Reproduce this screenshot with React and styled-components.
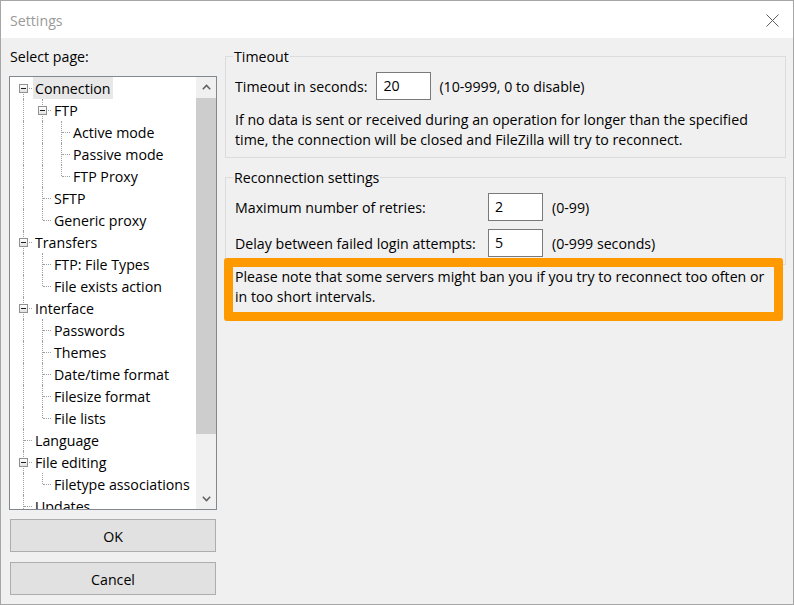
import React from "react";
import styled, { createGlobalStyle } from "styled-components";

const GlobalStyle = createGlobalStyle`
  html, body {
    margin: 0;
    padding: 0;
    background: #fff;
  }
  body {
    font-family: "Open Sans", "Noto Sans", sans-serif;
    font-size: 14.2px;
    color: #000;
  }
`;

const Window = styled.div`
  width: 794px;
  height: 605px;
  box-sizing: border-box;
  border: 1px solid #a6a6a6;
  display: flex;
  flex-direction: column;
  background: #f0f0f0;
`;

const TitleBar = styled.div`
  height: 37px;
  flex: none;
  background: #fff;
  display: flex;
  align-items: center;
  justify-content: space-between;
  padding: 1px 14px 0 9px;
  box-sizing: border-box;
  color: #9a9a9a;
`;

const CloseIcon = styled.svg`
  width: 13px;
  height: 13px;
  display: block;
`;

const Body = styled.div`
  flex: 1;
  display: flex;
  gap: 8px;
  padding: 8px 7px 0 8px;
`;

const LeftColumn = styled.div`
  width: 208px;
  flex: none;
  display: flex;
  flex-direction: column;
`;

const Caption = styled.div`
  line-height: 20px;
  padding-top: 1px;
  margin: 0 0 9px 1px;
`;

const TreeBox = styled.div`
  height: 434px;
  box-sizing: border-box;
  border: 1px solid #828790;
  background: #fff;
  display: flex;
  overflow: hidden;
`;

const TreeList = styled.div`
  flex: 1;
  min-width: 0;
  overflow: hidden;
  padding-left: 4px;
`;

const Row = styled.div`
  display: flex;
  align-items: center;
  height: 22px;
  white-space: nowrap;
`;

const Guide = styled.span`
  position: relative;
  flex: none;
  width: 19px;
  height: 22px;
  &::before {
    content: "";
    position: absolute;
    left: 9px;
    top: ${(p) => (p.$kind === "first" ? "11px" : "0")};
    bottom: ${(p) => (p.$kind === "elbow" ? "11px" : "0")};
    border-left: 1px dotted #a0a0a0;
    display: ${(p) => (p.$kind === "none" ? "none" : "block")};
  }
  &::after {
    content: "";
    position: absolute;
    left: 10px;
    right: 1px;
    top: 11px;
    border-top: 1px dotted #a0a0a0;
    display: ${(p) => (p.$kind === "pipe" || p.$kind === "none" ? "none" : "block")};
  }
`;

const Expander = styled.span`
  position: absolute;
  z-index: 1;
  left: 5px;
  top: 7px;
  width: 9px;
  height: 9px;
  box-sizing: border-box;
  border: 1px solid #919191;
  background: linear-gradient(#ffffff, #e2e2e2);
  &::after {
    content: "";
    position: absolute;
    left: 1px;
    right: 1px;
    top: 3px;
    height: 1px;
    background: #1e1e1e;
  }
`;

const Label = styled.span`
  padding: 1px 2px 0;
  line-height: 21px;
  background: ${(p) => (p.$selected ? "#e8e8e8" : "transparent")};
`;

const ScrollBar = styled.div`
  width: 20px;
  flex: none;
  background: #f0f0f0;
  display: flex;
  flex-direction: column;
`;

const ScrollArrow = styled.div`
  height: 20px;
  flex: none;
  display: flex;
  align-items: center;
  justify-content: center;
`;

const ScrollTrack = styled.div`
  flex: 1;
  padding-top: 1px;
`;

const Thumb = styled.div`
  height: 336px;
  background: #cdcdcd;
`;

const Button = styled.div`
  height: 33px;
  box-sizing: border-box;
  width: 206px;
  margin: ${(p) => p.$top}px 0 0 1px;
  padding-top: 1px;
  border: 1px solid #adadad;
  background: #e1e1e1;
  display: flex;
  align-items: center;
  justify-content: center;
`;

const RightColumn = styled.div`
  width: 561px;
  flex: none;
  display: flex;
  flex-direction: column;
`;

const Group = styled.fieldset`
  margin: ${(p) => p.$top || 0}px 0 0;
  padding: 6px 8px 7px 9px;
  border: 1px solid #dcdcdc;
  min-width: 0;
`;

const Legend = styled.legend`
  padding: 1px 1px 0;
  margin-left: -2px;
  line-height: 19px;
`;

const FieldRow = styled.div`
  display: flex;
  align-items: center;
  height: 28px;
`;

const FieldGrid = styled.div`
  display: grid;
  grid-template-columns: 244px 55px auto;
  column-gap: 9px;
  row-gap: 8px;
  align-items: center;
`;

const TextBox = styled.div`
  width: 55px;
  height: 28px;
  box-sizing: border-box;
  border: 1px solid #7a7a7a;
  background: #fff;
  padding-left: 6px;
  line-height: 26px;
  margin: ${(p) => (p.$inline ? "0 8px 0 9px" : "0")};
`;

const Text = styled.p`
  margin: 10px 0 0;
  line-height: 20px;
`;

const Note = styled.p`
  margin: -7px 3px 0 -1px;
  border: 9px solid #ff9900;
  border-radius: 3px;
  padding: 0 2px 5px;
  line-height: 20px;
`;

const tree = [
  {
    label: "Connection",
    selected: true,
    children: [
      {
        label: "FTP",
        children: [{ label: "Active mode" }, { label: "Passive mode" }, { label: "FTP Proxy" }],
      },
      { label: "SFTP" },
      { label: "Generic proxy" },
    ],
  },
  { label: "Transfers", children: [{ label: "FTP: File Types" }, { label: "File exists action" }] },
  {
    label: "Interface",
    children: [
      { label: "Passwords" },
      { label: "Themes" },
      { label: "Date/time format" },
      { label: "Filesize format" },
      { label: "File lists" },
    ],
  },
  { label: "Language" },
  { label: "File editing", children: [{ label: "Filetype associations" }] },
  { label: "Updates" },
];

// walk the tree into flat rows, keeping which guide lines each row needs.
// the root list goes on below the scroll edge, so its line never ends.
const flatten = (nodes, trail = []) =>
  nodes.flatMap((node, i) => {
    const root = trail.length === 0;
    const last = !root && i === nodes.length - 1;
    const kind = root && i === 0 ? "first" : last ? "elbow" : "tee";
    const guides = [...trail.map((more) => (more ? "pipe" : "none")), kind];
    const row = { ...node, guides, open: !!node.children };
    return [row, ...(node.children ? flatten(node.children, [...trail, !last]) : [])];
  });

const rows = flatten(tree);

const Chevron = ({ down }) => (
  <svg width="9" height="6" viewBox="0 0 9 6">
    <polyline
      points={down ? "0.8,0.8 4.5,4.6 8.2,0.8" : "0.8,5.2 4.5,1.4 8.2,5.2"}
      fill="none"
      stroke="#606060"
      strokeWidth="1.5"
    />
  </svg>
);

const App = () => {
  return (
    <>
      <GlobalStyle />
      <Window>
        <TitleBar>
          <span>Settings</span>
          <CloseIcon viewBox="0 0 13 13">
            <path d="M0.5 0.5 L12.5 12.5 M12.5 0.5 L0.5 12.5" stroke="#5f5f5f" strokeWidth="1" fill="none" />
          </CloseIcon>
        </TitleBar>
        <Body>
          <LeftColumn>
            <Caption>Select page:</Caption>
            <TreeBox>
              <TreeList>
                {rows.map((row) => (
                  <Row key={row.label}>
                    {row.guides.map((kind, i) => (
                      <Guide key={i} $kind={kind}>
                        {row.open && i === row.guides.length - 1 && <Expander />}
                      </Guide>
                    ))}
                    <Label $selected={row.selected}>{row.label}</Label>
                  </Row>
                ))}
              </TreeList>
              <ScrollBar>
                <ScrollArrow>
                  <Chevron />
                </ScrollArrow>
                <ScrollTrack>
                  <Thumb />
                </ScrollTrack>
                <ScrollArrow>
                  <Chevron down />
                </ScrollArrow>
              </ScrollBar>
            </TreeBox>
            <Button $top={9}>OK</Button>
            <Button $top={10}>Cancel</Button>
          </LeftColumn>
          <RightColumn>
            <Group>
              <Legend>Timeout</Legend>
              <FieldRow>
                Timeout in seconds:
                <TextBox $inline>20</TextBox>
                (10-9999, 0 to disable)
              </FieldRow>
              <Text>
                If no data is sent or received during an operation for longer than the specified
                time, the connection will be closed and FileZilla will try to reconnect.
              </Text>
            </Group>
            <Group $top={9}>
              <Legend>Reconnection settings</Legend>
              <FieldGrid>
                <span>Maximum number of retries:</span>
                <TextBox>2</TextBox>
                <span>(0-99)</span>
                <span>Delay between failed login attempts:</span>
                <TextBox>5</TextBox>
                <span>(0-999 seconds)</span>
              </FieldGrid>
            </Group>
            <Note>
              Please note that some servers might ban you if you try to reconnect too often or in
              too short intervals.
            </Note>
          </RightColumn>
        </Body>
      </Window>
    </>
  );
};

export default App;
